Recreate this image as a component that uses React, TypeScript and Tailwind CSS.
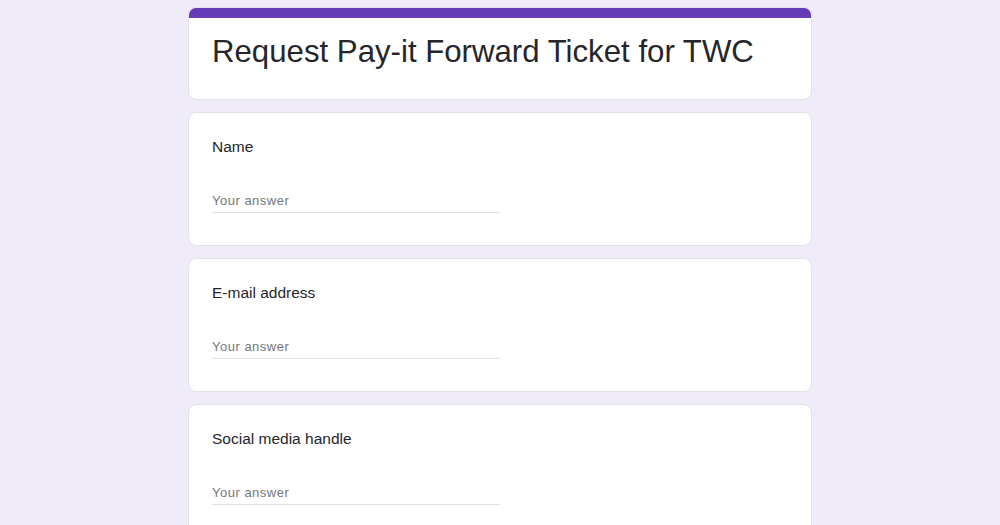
import React from 'react';

const questions = ['Name', 'E-mail address', 'Social media handle'];

const QuestionCard: React.FC<{ label: string }> = ({ label }) => (
  <div className="bg-white rounded-lg border border-[#e3e0ea] px-[23px] pt-[22px] pb-8 h-[134px]">
    <div className="text-[15.5px] leading-6 text-[#26262a]">{label}</div>
    <div className="mt-[29px] w-[288px] border-b border-[#e3e3e3] pb-0">
      <span className="text-[13px] leading-5 tracking-[0.5px] text-[#74777c]">Your answer</span>
    </div>
  </div>
);

const App: React.FC = () => {
  return (
    <div
      className="min-h-screen bg-[#efebf8] flex justify-center pt-[7px]"
      style={{ fontFamily: '"Liberation Sans", Arial, sans-serif' }}
    >
      <div className="w-[624px] flex flex-col gap-[12px]">
        <div className="bg-white rounded-lg border border-[#e3e0ea] overflow-hidden h-[93px]">
          <div className="h-[10px] bg-[#673ab7]" />
          <div className="px-[23px] pt-[14px] text-[31.2px] leading-[40px] text-[#26262a]">
            Request Pay-it Forward Ticket for TWC
          </div>
        </div>
        {questions.map(q => (
          <QuestionCard key={q} label={q} />
        ))}
      </div>
    </div>
  );
};

export default App;
